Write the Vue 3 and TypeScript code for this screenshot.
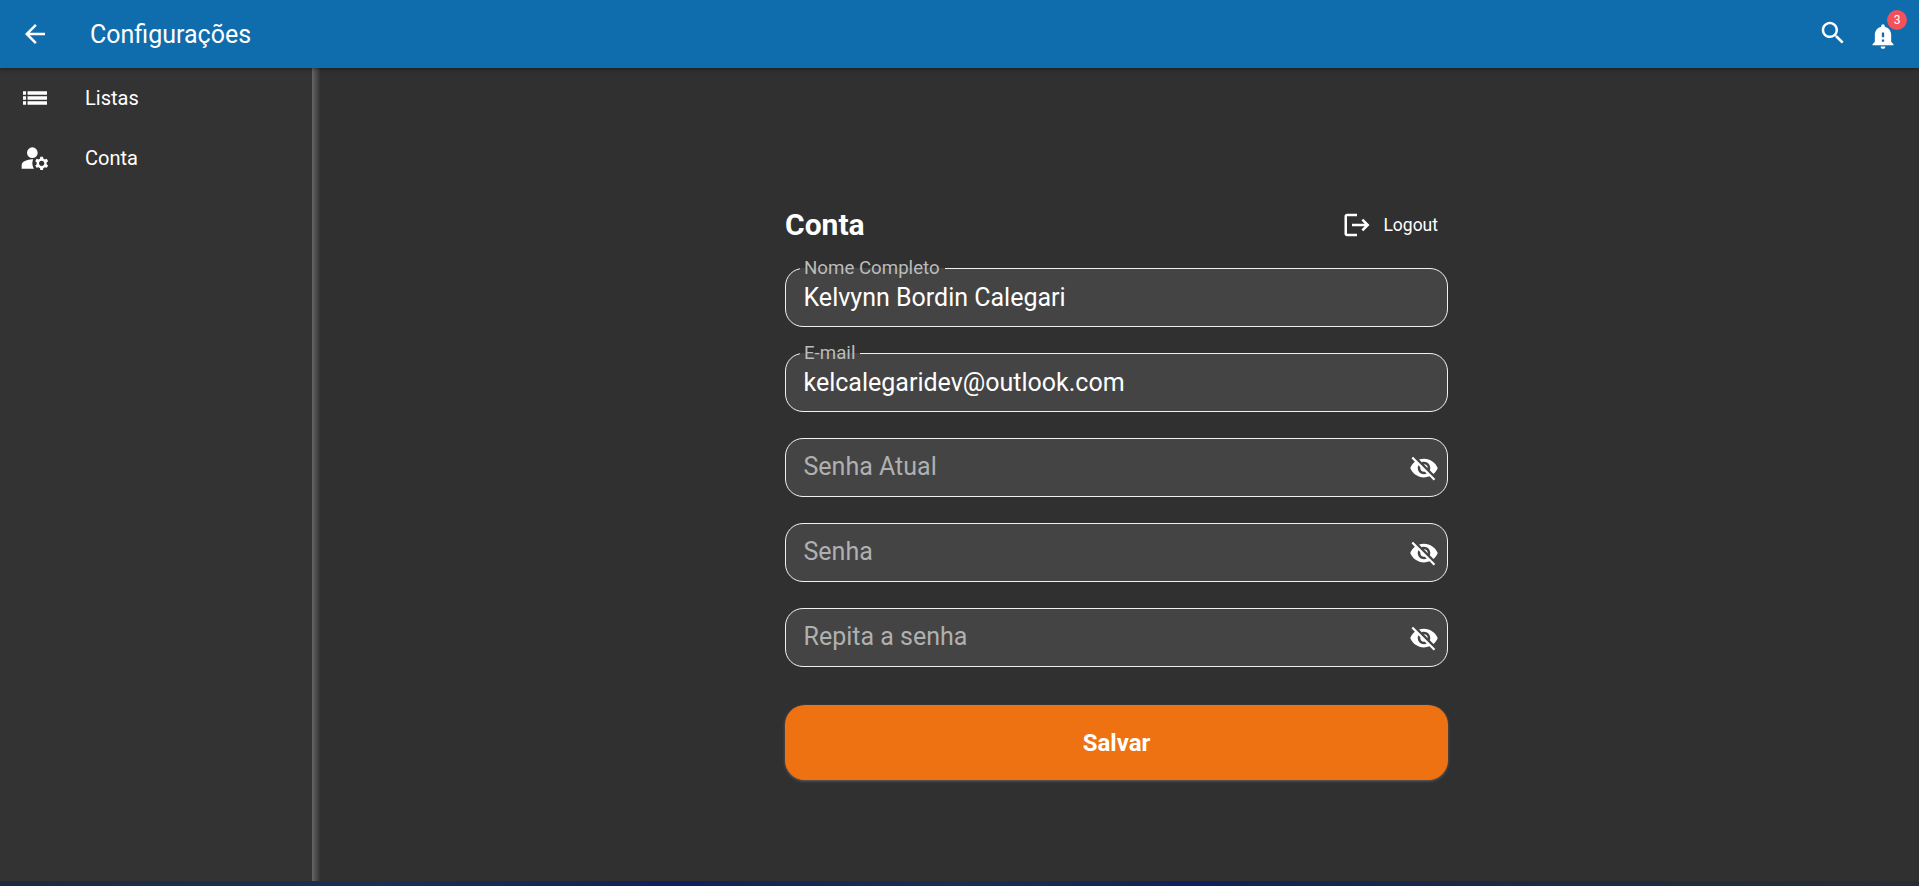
<template>
  <div class="page">
    <header class="topbar">
      <button class="icon-btn back">
        <svg viewBox="0 0 24 24" width="30" height="30"><path d="M20 11H7.83l5.59-5.59L12 4l-8 8 8 8 1.41-1.41L7.83 13H20v-2z" /></svg>
      </button>
      <h1 class="page-title">Configurações</h1>
      <div class="topbar-actions">
        <svg class="search" viewBox="0 0 24 24" width="30" height="30"><path d="M15.5 14h-.79l-.28-.27C15.41 12.59 16 11.11 16 9.5 16 5.91 13.09 3 9.5 3S3 5.91 3 9.5 5.91 16 9.5 16c1.61 0 3.09-.59 4.23-1.57l.27.28v.79l5 4.99L20.49 19l-4.99-5zm-6 0C7.01 14 5 11.99 5 9.5S7.01 5 9.5 5 14 7.01 14 9.5 11.99 14 9.5 14z" /></svg>
        <div class="bell">
          <svg viewBox="0 0 24 24" width="28" height="28"><path d="M12 23c1.1 0 1.99-.89 1.99-1.99h-3.98c0 1.1.89 1.99 1.99 1.99zm7-6v-6c0-3.35-2.36-6.15-5.5-6.83V3.5c0-.83-.67-1.5-1.5-1.5s-1.5.67-1.5 1.5v.67C7.36 4.85 5 7.65 5 11v6l-2 2v1h18v-1l-2-2zm-6 0h-2v-2h2v2zm0-4h-2V9h2v4z" /></svg>
          <span class="badge">3</span>
        </div>
      </div>
    </header>

    <div class="body">
      <aside class="sidebar">
        <div v-for="item in menu" :key="item.label" class="menu-item">
          <svg viewBox="0 0 24 24" width="32" height="32"><path v-for="d in item.paths" :key="d" :d="d" /></svg>
          <span>{{ item.label }}</span>
        </div>
      </aside>

      <main class="content">
        <form class="account-form" @submit.prevent>
          <div class="form-head">
            <h2>Conta</h2>
            <div class="logout">
              <svg viewBox="0 0 24 24" width="30" height="30"><path d="M17 7l-1.41 1.41L18.17 11H8v2h10.17l-2.58 2.58L17 17l5-5zM4 5h8V3H4c-1.1 0-2 .9-2 2v14c0 1.1.9 2 2 2h8v-2H4V5z" /></svg>
              <span>Logout</span>
            </div>
          </div>

          <div v-for="field in fields" :key="field.label" class="field">
            <fieldset class="outline" :class="{ filled: field.value }">
              <legend v-if="field.value">{{ field.label }}</legend>
            </fieldset>
            <span v-if="field.value" class="value">{{ field.value }}</span>
            <span v-else class="placeholder">{{ field.label }}</span>
            <svg v-if="!field.value" class="eye" viewBox="0 0 24 24" width="30" height="30"><path d="M12 7c2.76 0 5 2.24 5 5 0 .65-.13 1.26-.36 1.83l2.92 2.92c1.51-1.26 2.7-2.89 3.43-4.75-1.73-4.39-6-7.5-11-7.5-1.4 0-2.74.25-3.98.7l2.16 2.16C10.74 7.13 11.35 7 12 7zM2 4.27l2.28 2.28.46.46C3.08 8.3 1.78 10.02 1 12c1.73 4.39 6 7.5 11 7.5 1.55 0 3.03-.3 4.38-.84l.42.42L19.73 22 21 20.73 3.27 3 2 4.27zM7.53 9.8l1.55 1.55c-.05.21-.08.43-.08.65 0 1.66 1.34 3 3 3 .22 0 .44-.03.65-.08l1.55 1.55c-.67.33-1.41.53-2.2.53-2.76 0-5-2.24-5-5 0-.79.2-1.53.53-2.2zm4.31-.78l3.15 3.15.02-.16c0-1.66-1.34-3-3-3l-.17.01z" /></svg>
          </div>

          <button class="save" type="submit">Salvar</button>
        </form>
      </main>
    </div>
    <div class="strip"></div>
  </div>
</template>

<script setup lang="ts">
interface MenuItem {
  label: string
  paths: string[]
}

interface Field {
  label: string
  value?: string
}

const menu: MenuItem[] = [
  {
    label: 'Listas',
    // thicker bars than the stock "list" icon, the rows nearly touch
    paths: ['M3 7h2.3v2.6H3zM3 10.7h2.3v2.6H3zM3 14.4h2.3V17H3zM6.4 7H21v2.6H6.4zM6.4 10.7H21v2.6H6.4zM6.4 14.4H21V17H6.4z'],
  },
  {
    label: 'Conta',
    paths: [
      'M10 4a4 4 0 1 0 0 8 4 4 0 0 0 0-8z',
      'M10.67 13.02C10.45 13.01 10.23 13 10 13c-2.42 0-4.68.67-6.61 1.82-.88.52-1.39 1.5-1.39 2.53V20h9.26c-.79-1.13-1.26-2.51-1.26-4 0-1.07.25-2.07.67-2.98z',
      'M20.75 16c0-.22-.03-.42-.06-.63l1.14-1.01-1-1.73-1.45.49c-.32-.27-.68-.48-1.08-.63L18 11h-2l-.3 1.49c-.4.15-.76.36-1.08.63l-1.45-.49-1 1.73 1.14 1.01c-.03.21-.06.41-.06.63s.03.42.06.63l-1.14 1.01 1 1.73 1.45-.49c.32.27.68.48 1.08.63L16 21h2l.3-1.49c.4-.15.76-.36 1.08-.63l1.45.49 1-1.73-1.14-1.01c.03-.21.06-.41.06-.63zM17 18c-1.1 0-2-.9-2-2s.9-2 2-2 2 .9 2 2-.9 2-2 2z',
    ],
  },
]

const fields: Field[] = [
  { label: 'Nome Completo', value: 'Kelvynn Bordin Calegari' },
  { label: 'E-mail', value: 'kelcalegaridev@outlook.com' },
  { label: 'Senha Atual' },
  { label: 'Senha' },
  { label: 'Repita a senha' },
]
</script>

<style>
html, body {
  margin: 0;
  background: #303030;
}
</style>

<style scoped>
.page {
  height: 886px;
  display: flex;
  flex-direction: column;
  overflow: hidden;
  font-family: Roboto, "Liberation Sans", sans-serif;
  color: #fff;
  background: #303030;
}

svg {
  fill: #fff;
  display: block;
  flex: none;
}

.topbar {
  height: 68px;
  flex: none;
  display: flex;
  align-items: center;
  padding: 0 17px 0 20px;
  background: #0f6cad;
  box-shadow: 0 1px 4px rgba(0, 0, 0, 0.4);
  position: relative;
  z-index: 1;
}

.icon-btn {
  padding: 0;
  border: 0;
  background: none;
}

.page-title {
  margin: 0 0 0 40px;
  font-size: 25px;
  font-weight: 400;
}

.topbar-actions {
  margin-left: auto;
  display: flex;
  align-items: center;
  gap: 21px;
}

.search {
  margin-top: -2px;
}

.bell {
  position: relative;
  margin-top: 4px;
  margin-right: 5px;
}

.badge {
  position: absolute;
  top: -12px;
  right: -10px;
  width: 20px;
  height: 20px;
  border-radius: 50%;
  background: #f2525a;
  font-size: 12px;
  line-height: 20px;
  text-align: center;
}

.body {
  flex: 1;
  min-height: 0;
  display: flex;
}

.sidebar {
  width: 312px;
  flex: none;
  background: #333;
  position: relative;
}

.sidebar::after {
  content: '';
  position: absolute;
  top: 0;
  bottom: 0;
  left: 100%;
  width: 8px;
  background: linear-gradient(90deg, #666, #333);
}

.menu-item {
  height: 60px;
  display: flex;
  align-items: center;
  gap: 34px;
  padding-left: 19px;
  font-size: 20px;
}

.content {
  flex: 1;
  display: flex;
  justify-content: center;
  padding: 135px 0 0 2px;
}

.account-form {
  width: 663px;
}

.form-head {
  height: 65px;
  padding: 0 10px 22px 0;
  box-sizing: border-box;
  display: flex;
  align-items: center;
  justify-content: space-between;
}

.form-head h2 {
  margin: 0;
  font-size: 30px;
  font-weight: 700;
}

.logout {
  display: flex;
  align-items: center;
  gap: 11px;
  font-size: 17.5px;
}

.field {
  position: relative;
  height: 59px;
  margin-bottom: 26px;
  display: flex;
  align-items: center;
  padding: 0 18.5px;
  font-size: 25px;
}

.outline {
  position: absolute;
  inset: 0;
  margin: 0;
  padding: 0 14px;
  border: 1px solid #f0f0f0;
  border-radius: 18px;
  background: #444;
}

.outline.filled {
  top: -9px;
}

.outline legend {
  padding: 0 5px 0 4px;
  font-size: 18.7px;
  line-height: 18px;
  color: #bbb;
}

.value,
.placeholder {
  position: relative;
}

.value {
  color: #fff;
}

.placeholder {
  margin-top: -2px;
  color: #b0b0b0;
}

.eye {
  position: relative;
  margin-left: auto;
  margin-right: -9px;
}

.save {
  display: block;
  width: 100%;
  height: 75px;
  margin-top: 38px;
  border: 0;
  border-radius: 20px;
  background: #ee7211;
  box-shadow: 0 1px 3px rgba(255, 255, 255, 0.25);
  color: #fff;
  font-family: inherit;
  font-size: 24px;
  font-weight: 700;
}

.strip {
  height: 5px;
  flex: none;
  background: linear-gradient(90deg, #1d2b3c 0%, #1a2f55 20%, #10205c 35%, #1b2e50 50%, #10205c 62%, #1d2b40 80%, #262d36 100%);
}
</style>
